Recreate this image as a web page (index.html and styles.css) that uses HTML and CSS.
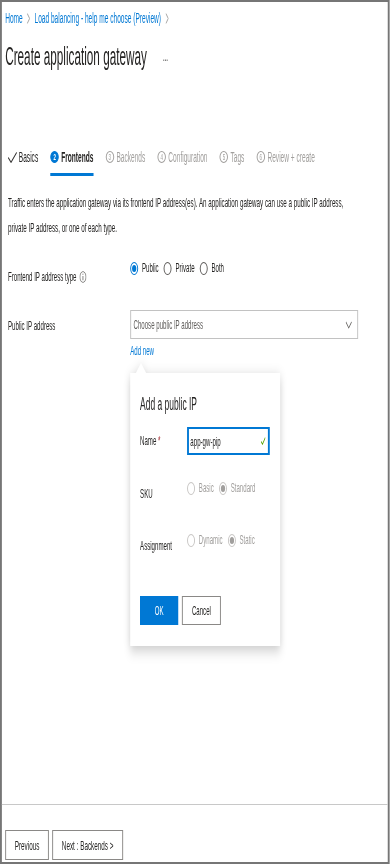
FILE: index.html
```html
<!DOCTYPE html>
<html lang="en">
<head>
  <meta charset="UTF-8">
  <title>Create application gateway</title>
  <link rel="stylesheet" href="styles.css">
</head>
<body>

 <div class="page">
  <div class="frame">
    <div class="content">
      <nav class="crumbs">
        <a href="#">Home</a>
        <svg class="sep" width="7" height="11" viewBox="0 0 7 11"><path d="M1 0.5 L6 5.5 L1 10.5" fill="none" stroke="#8a8886" stroke-width="1"/></svg>
        <a href="#">Load balancing - help me choose (Preview)</a>
        <svg class="sep" width="7" height="11" viewBox="0 0 7 11"><path d="M1 0.5 L6 5.5 L1 10.5" fill="none" stroke="#8a8886" stroke-width="1"/></svg>
      </nav>

      <div class="title-row">
        <h1>Create application gateway</h1>
        <span class="more">...</span>
      </div>

      <div class="tabs">
        <div class="tab done">
          <svg width="19" height="11" viewBox="0 0 19 11"><path d="M0.5 5.5 L6.5 10.3 L18.5 0.5" fill="none" stroke="#323130" stroke-width="1.6"/></svg>
          Basics
        </div>
        <div class="tab active"><span class="num">2</span>Frontends</div>
        <div class="tab"><span class="num">3</span>Backends</div>
        <div class="tab"><span class="num">4</span>Configuration</div>
        <div class="tab"><span class="num">5</span>Tags</div>
        <div class="tab"><span class="num">6</span>Review + create</div>
      </div>

      <p class="intro">Traffic enters the application gateway via its frontend IP address(es). An application gateway can use a public IP address, private IP address, or one of each type.</p>

      <div class="field field-type">
        <div class="label">
          Frontend IP address type
          <svg class="info" width="15" height="12" viewBox="0 0 15 12"><ellipse cx="7.5" cy="6" rx="6.5" ry="5.4" fill="none" stroke="#605e5c" stroke-width="1"/><path d="M7.5 5 V9.2" stroke="#605e5c" stroke-width="1.6"/><circle cx="7.5" cy="3.3" r="0.8" fill="#605e5c"/></svg>
        </div>
        <div class="radios">
          <label class="radio checked"><span class="circle"></span>Public</label>
          <label class="radio"><span class="circle"></span>Private</label>
          <label class="radio"><span class="circle"></span>Both</label>
        </div>
      </div>

      <div class="field field-ip">
        <div class="label">Public IP address</div>
        <div class="control">
          <div class="select">
            Choose public IP address
            <svg width="14" height="8" viewBox="0 0 14 8"><path d="M1 1 L7 7 L13 1" fill="none" stroke="#605e5c" stroke-width="1.2"/></svg>
          </div>
          <a class="add-new" href="#">Add new</a>

          <div class="callout">
            <h2>Add a public IP</h2>
            <div class="row row-name">
              <div class="row-label">Name <span class="req">*</span></div>
              <div class="input">
                app-gw-pip
                <svg width="10" height="8" viewBox="0 0 10 8"><path d="M0.5 4.5 L3.5 7.3 L9.5 0.5" fill="none" stroke="#57a300" stroke-width="1.3"/></svg>
              </div>
            </div>
            <div class="row row-sku">
              <div class="row-label">SKU</div>
              <div class="radios">
                <label class="radio disabled"><span class="circle"></span>Basic</label>
                <label class="radio disabled checked"><span class="circle"></span>Standard</label>
              </div>
            </div>
            <div class="row row-assign">
              <div class="row-label">Assignment</div>
              <div class="radios">
                <label class="radio disabled"><span class="circle"></span>Dynamic</label>
                <label class="radio disabled checked"><span class="circle"></span>Static</label>
              </div>
            </div>
            <div class="actions">
              <button class="btn-ok">OK</button>
              <button class="btn-cancel">Cancel</button>
            </div>
          </div>
        </div>
      </div>
    </div>

    <div class="footer">
      <button class="prev">Previous</button>
      <button class="next">Next : Backends &gt;</button>
    </div>
  </div>
 </div>

</body>
</html>
```

FILE: styles.css
```css
body {
  margin: 0;
  background: #fff;
}
.page {
  width: 390px;
  height: 864px;
  overflow: hidden;
}
/* the whole page is drawn squeezed sideways, like the screenshot */
.frame {
  width: 829px;
  height: 864px;
  box-sizing: border-box;
  border: solid #767676;
  border-width: 2px 4px;
  display: flex;
  flex-direction: column;
  transform: scaleX(0.47);
  transform-origin: 0 0;
  font-family: "Segoe UI", "Liberation Sans", Arial, sans-serif;
  font-size: 13px;
  color: #252423;
}
.content {
  flex: 1;
  padding: 7px 0 0 7px;
}
.crumbs {
  display: flex;
  align-items: center;
  gap: 9px;
  font-size: 14px;
  line-height: 18px;
}
.crumbs a {
  color: #0078d4;
  text-decoration: none;
}
.title-row {
  display: flex;
  align-items: center;
  gap: 34px;
  margin-top: 12px;
}
h1 {
  margin: 0;
  font-size: 25px;
  font-weight: normal;
  line-height: 34px;
}
.more {
  line-height: 13px;
}
.tabs {
  display: flex;
  gap: 26px;
  margin: 74px 0 0 6px;
}
.tab {
  display: flex;
  align-items: center;
  gap: 5px;
  font-size: 14px;
  line-height: 20px;
  color: #a19f9d;
  padding-bottom: 6px;
  border-bottom: 3px solid transparent;
}
.tab.done {
  color: #252423;
  gap: 4px;
}
.tab.active {
  color: #252423;
  font-weight: bold;
  border-bottom-color: #0078d4;
}
.num {
  width: 18px;
  height: 12px;
  box-sizing: border-box;
  border: solid #a19f9d;
  border-width: 1px 2px;
  border-radius: 50%;
  font-size: 9.5px;
  line-height: 10px;
  font-weight: normal;
  text-align: center;
}
.active .num {
  background: #0078d4;
  border-color: #0078d4;
  color: #fff;
  font-weight: bold;
}
.intro {
  margin: 14px 0 0 6px;
  max-width: 735px;
  font-size: 13.3px;
  line-height: 25px;
}
.field {
  display: grid;
  grid-template-columns: 260px 485px;
  align-items: start;
  margin-left: 6px;
}
.field-type {
  margin-top: 21px;
}
.field-ip {
  margin-top: 24px;
}
.label {
  padding-top: 7px;
  line-height: 18px;
  display: flex;
  align-items: center;
  gap: 6px;
}
.radios {
  display: flex;
  align-items: center;
  height: 14px;
}
.radio {
  display: flex;
  align-items: center;
  gap: 8px;
  margin-right: 11px;
  line-height: 14px;
}
.circle {
  width: 17px;
  height: 13px;
  box-sizing: border-box;
  border: solid #605e5c;
  border-width: 1px 2px;
  border-radius: 50%;
  display: flex;
  align-items: center;
  justify-content: center;
}
.checked .circle {
  border-color: #0078d4;
}
.checked .circle::after {
  content: "";
  width: 9px;
  height: 7px;
  border-radius: 50%;
  background: #0078d4;
}
.radio.disabled {
  color: #a19f9d;
}
.disabled .circle {
  border-color: #c8c6c4;
}
.disabled.checked .circle::after {
  background: #a19f9d;
}
.control {
  position: relative;
}
.select {
  height: 29px;
  box-sizing: border-box;
  border: solid #c2c2c2;
  border-width: 1px 2px;
  display: flex;
  align-items: center;
  justify-content: space-between;
  padding: 0 11px 0 5px;
  color: #605e5c;
}
.add-new {
  display: inline-block;
  margin-top: 4px;
  line-height: 16px;
  color: #0078d4;
  text-decoration: none;
}
.callout {
  position: absolute;
  top: 63px;
  left: 0;
  width: 319px;
  height: 273px;
  box-sizing: border-box;
  padding: 19px 0 0 21px;
  background: #fff;
  filter: drop-shadow(0 4px 7px rgba(0, 0, 0, 0.22));
}
.callout::before {
  content: "";
  position: absolute;
  top: -10px;
  left: 12px;
  border-left: 11px solid transparent;
  border-right: 11px solid transparent;
  border-bottom: 10px solid #fff;
}
h2 {
  margin: 0;
  font-size: 18px;
  font-weight: normal;
  line-height: 24px;
}
.row {
  display: grid;
  grid-template-columns: 100px auto;
}
.row-label {
  line-height: 16px;
  padding-top: 5px;
}
.row-name {
  margin-top: 11px;
  align-items: center;
}
.row-name .row-label {
  padding-top: 0;
}
.row-sku {
  margin-top: 26px;
}
.row-assign {
  margin-top: 31px;
}
.req {
  color: #a4262c;
}
.input {
  width: 176px;
  height: 28px;
  box-sizing: border-box;
  border: solid #0078d4;
  border-width: 2px 4px;
  display: flex;
  align-items: center;
  justify-content: space-between;
  padding: 0 5px 0 3px;
}
.actions {
  display: flex;
  gap: 8px;
  margin-top: 42px;
}
.actions button, .footer button {
  font: inherit;
  color: #252423;
  background: #fff;
  border: solid #8a8886;
  border-width: 1px 2px;
  padding: 0;
}
.actions .btn-ok {
  width: 81px;
  height: 29px;
  color: #fff;
  background: #0078d4;
  border-color: #0078d4;
}
.btn-cancel {
  width: 83px;
  height: 29px;
}
.footer {
  border-top: 1px solid #c8c8c8;
  padding: 25px 0 2px 7px;
  display: flex;
  gap: 7px;
}
.footer button {
  height: 30px;
  font-size: 13.5px;
}
.prev {
  width: 93px;
}
.next {
  width: 151px;
}
```
